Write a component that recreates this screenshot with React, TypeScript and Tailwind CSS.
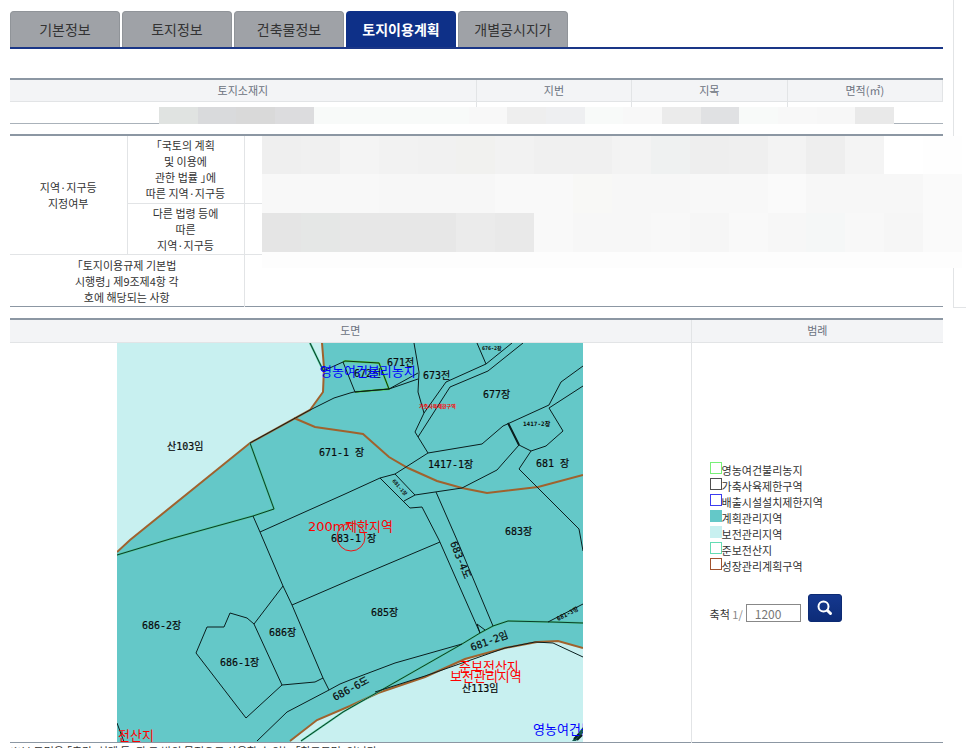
import { useState } from 'react'

const tabs = ['기본정보', '토지정보', '건축물정보', '토지이용계획', '개별공시지가']

const legend = [
  { name: '영농여건불리농지', swatch: 'border border-[#78f078] bg-white' },
  { name: '가축사육제한구역', swatch: 'border border-[#505050] bg-white' },
  { name: '배출시설설치제한지역', swatch: 'border border-[#3c3cf0] bg-white' },
  { name: '계획관리지역', swatch: 'bg-[#64c8c8]' },
  { name: '보전관리지역', swatch: 'bg-[#c8f0f0]' },
  { name: '준보전산지', swatch: 'border border-[#64dcb4] bg-white' },
  { name: '성장관리계획구역', swatch: 'border border-[#a0522d] bg-white' },
]

// Masked values, one colour per block
const landMask = [
  '#e0e3e1', '#d9dadc', '#d9d9d9', '#dcdcde', '#f8faf9', '#f8faf9', '#f8faf9', '#f8faf9', '#f8f8f8', '#eeeeee',
  '#eeeff1', '#f8faf9', '#f8f8f8', '#ebebeb', '#e0e1e3', '#f8faf9', '#f8f8f8', '#f7f7f7', '#e9e9e9',
]

const zoneMask = [
  [
    '#efefef', '#f0f0f0', '#f4f4f4', '#f2f2f2', '#f1f1f1', '#f1f1ef', '#f2f2f2', '#f0f0f0', '#f0f0f0',
    '#f3f3f3', '#eff1f1', '#eeeeee', '#efefef', '#f3f3f3', '#eeeeee', '#f4f4f4', '#ffffff', '#fefefe',
  ],
  [
    '#f8f8f8', '#f8f8f8', '#f8f8f8', '#f7f7f7', '#f7f7f7', '#f7f7f7', '#f9f9f9', '#f9f9f9', '#f8f8f6',
    '#f7f7f7', '#f7f7f7', '#f8f8f8', '#f8f8f8', '#fafafa', '#f7f7f7', '#f7f7f7', '#f7f7f7', '#fafafa',
  ],
  [
    '#e5e5e5', '#e5e7e6', '#e7e7e7', '#e7e7e7', '#e7e7e7', '#ebebeb', '#e9e9e9', '#f9f9f9', '#f7f7f7',
    '#f7f7f7', '#f8f8f8', '#f6f6f6', '#f9f9f9', '#f7f7f7', '#f5f7f7', '#f8f8f8', '#f6f6f6', '#fafafa',
  ],
]

const parcels = [
  '310,410 334,398 350,393 354,392 389,389 418,373',
  '389,389 418,379',
  '414,343 419,372 418,392 424,413',
  '512,343 486,364 446,382 424,413 415,432 428,453',
  '523,343 488,371 450,387 418,437',
  '477,343 486,364',
  '428,453 482,444 503,426 549,405 561,382 583,366',
  '583,386 549,408 563,431 546,446 531,451 519,445 508,423',
  '531,451 519,469 579,529 583,551',
  '519,445 497,470 462,488 415,495 404,501',
  '428,453 395,474 380,478 345,494 260,532',
  '395,474 415,495',
  '380,478 410,508 422,507 439,540 480,633',
  '436,492 457,540 493,626',
  '253,516 260,532 283,586 292,605 323,678 329,690',
  '283,586 254,624 282,685 315,682 323,678',
  '292,605 350,580 440,542',
  '254,624 247,618 230,613 224,627 207,627 196,653 246,718 282,685',
  '257,741 287,712 329,690 340,684 350,680 395,663 462,644',
  '548,622 583,604',
  '375,692 425,676 505,648 535,642 553,643 583,657',
  '480,633 477,624 485,630',
  '117,723 124,742',
  '323,371 343,362 355,392',
]

const forestLines = [
  '310,343 323,370',
  '250,443 274,509 253,516 170,539 117,555',
  '301,741 343,712 378,692 462,644 480,633 493,626 508,621 552,622 583,623',
]

const growthLines = [
  '322,343 324,368 323,392 310,410 250,443 130,540 117,552',
  '294,418 315,427 350,432 363,434 389,457 408,468 437,481 462,488 487,493 538,487 583,475',
  '290,741 317,720 350,706 378,693 425,677 465,659 505,648 537,642 558,641 583,648',
]

const lotLabels = [
  { x: 167, y: 450, text: '산103임' },
  { x: 387, y: 366, text: '671전' },
  { x: 354, y: 377, text: '672전' },
  { x: 423, y: 379, text: '673전' },
  { x: 483, y: 398, text: '677장' },
  { x: 319, y: 456, text: '671-1 장' },
  { x: 428, y: 468, text: '1417-1장' },
  { x: 536, y: 467, text: '681 장' },
  { x: 331, y: 542, text: '683-1 장' },
  { x: 505, y: 535, text: '683장' },
  { x: 371, y: 616, text: '685장' },
  { x: 142, y: 629, text: '686-2장' },
  { x: 269, y: 636, text: '686장' },
  { x: 220, y: 666, text: '686-1장' },
  { x: 462, y: 692, text: '산113임' },
]

function Mask({ colors }: { colors: string[] }) {
  return (
    <div className="flex flex-1">
      {colors.map((color, i) => (
        <div key={i} className="flex-1" style={{ backgroundColor: color }} />
      ))}
    </div>
  )
}

function ParcelMap() {
  return (
    <svg
      className="mx-auto block font-['DejaVu_Sans_Mono','Noto_Sans_CJK_KR',monospace]"
      width="466"
      height="399"
      viewBox="117 343 466 399"
      role="img"
      aria-label="도면"
    >
      <rect x="117" y="343" width="466" height="399" fill="#64c8c8" />
      <polygon points="117,343 322,343 324,368 323,392 310,410 250,443 130,540 117,552" fill="#c8f0f0" />
      <polygon
        points="290,742 317,720 350,706 378,693 425,677 465,659 505,648 537,642 558,641 583,648 583,742"
        fill="#c8f0f0"
      />
      <polyline points="343,362 345,361 379,363 389,389 355,392" fill="none" stroke="#50d250" strokeWidth="2" />
      <polyline points="343,362 345,361 379,363 389,389 355,392" fill="none" stroke="#103010" strokeWidth="1" />
      <g fill="none" stroke="#a0622d" strokeWidth="2">
        {growthLines.map((points) => (
          <polyline key={points} points={points} />
        ))}
      </g>
      <g fill="none" stroke="#50c896" strokeWidth="2">
        {forestLines.map((points) => (
          <polyline key={points} points={points} />
        ))}
      </g>
      <g fill="none" stroke="#0a3c28" strokeWidth="1">
        {forestLines.map((points) => (
          <polyline key={points} points={points} />
        ))}
      </g>
      <g fill="none" stroke="#0a1e1e" strokeWidth="1">
        {parcels.map((points) => (
          <polyline key={points} points={points} />
        ))}
        <polyline points="310,410 250,443" />
        <polyline points="508,423 519,445" strokeWidth="2" />
      </g>
      <path d="M572 741l11-14v6l-7 8z" fill="#145a50" />
      <path d="M574 739l5-5M577 740l5-5" stroke="#0a1e1e" strokeWidth="2" />
      <circle cx="323" cy="369" r="2" fill="none" stroke="#0a1e78" />

      <g fill="#0a0a0a" stroke="#0a0a0a" strokeWidth="0.2" fontSize="10">
        {lotLabels.map(({ x, y, text }) => (
          <text key={text} x={x} y={y}>
            {text}
          </text>
        ))}
        <text transform="translate(450 543) rotate(68)">683-4도</text>
        <text transform="translate(472 651) rotate(-20)">681-2임</text>
        <text transform="translate(335 701) rotate(-28)">686-6도</text>
      </g>
      <g fill="#0a0a0a" fontSize="6" fontWeight="bold">
        <text x="482" y="350" fontSize="5">676-2장</text>
        <text x="523" y="426">1417-2장</text>
        <text transform="translate(392 481) rotate(50)" fontSize="5">681-1장</text>
        <text transform="translate(558 621) rotate(-27)">681-3장</text>
      </g>

      <g className="font-['DejaVu_Sans','Noto_Sans_CJK_KR',sans-serif]" fontSize="13">
        <text x="320" y="376" fill="#0000ff">영농여건불리농지</text>
        <text x="533" y="734" fill="#0000ff">영농여건불리농지</text>
        <g fill="#ff0000">
          <text x="308" y="531">200m&apos;</text>
          <text x="345" y="531">제한지역</text>
          <text x="459" y="671">준보전산지</text>
          <text x="450" y="681">보전관리지역</text>
          <text x="118" y="740">전산지</text>
          <text x="419" y="408" fontSize="5" fontWeight="bold">가축사육제한구역</text>
        </g>
      </g>
      <circle cx="351" cy="537" r="14" fill="none" stroke="#f01414" />
    </svg>
  )
}

function App() {
  const [active, setActive] = useState('토지이용계획')
  const [scale, setScale] = useState('1200')

  return (
    <div className="flex h-screen items-start overflow-hidden bg-white pl-[10px] font-['Noto_Sans_CJK_KR',sans-serif] text-[11px] leading-4 text-[#333]">
      <main className="min-w-0 flex-1 pt-[11px]">
        <nav className="flex gap-[2px] border-b-2 border-[#1a3687]">
          {tabs.map((tab) => (
            <button
              key={tab}
              type="button"
              onClick={() => setActive(tab)}
              className={
                tab === active
                  ? 'h-9 w-[110px] rounded-t bg-[#0e3088] text-sm font-bold text-white'
                  : 'h-9 w-[110px] rounded-t border border-b-0 border-[#909499] bg-[#9fa2a7] pb-[2px] text-sm text-[#333]'
              }
            >
              {tab}
            </button>
          ))}
        </nav>

        <div className="relative mt-[29px]">
          <table className="w-full table-fixed border-collapse border-t-2 border-b border-t-[#8c97a3] border-b-[#aab2ba]">
            <thead>
              <tr className="h-[22px] border-b border-[#e2e4e6] bg-[#f3f4f6] text-[#6b7280]">
                <th className="w-1/2 border-r border-[#e2e4e6] p-0 pb-px font-normal">토지소재지</th>
                <th className="w-1/6 border-r border-[#e2e4e6] p-0 pb-px font-normal">지번</th>
                <th className="w-1/6 border-r border-[#e2e4e6] p-0 pb-px font-normal">지목</th>
                <th className="w-1/6 border-r border-[#e2e4e6] p-0 pb-px font-normal">면적(㎡)</th>
              </tr>
            </thead>
            <tbody>
              <tr className="h-[22px]">
                <td className="border-r border-[#e2e4e6]" />
                <td className="border-r border-[#e2e4e6]" />
                <td className="border-r border-[#e2e4e6]" />
                <td />
              </tr>
            </tbody>
          </table>
          <div className="absolute right-[49px] bottom-0 left-[149px] flex h-[17px]">
            <Mask colors={landMask} />
          </div>
        </div>

        <div className="relative mt-[10px]">
          <table className="w-full table-fixed border-collapse border-t-2 border-b border-[#8c97a3] text-center">
            <colgroup>
              <col className="w-[117px]" />
              <col className="w-[117px]" />
              <col />
            </colgroup>
            <tbody>
              <tr className="h-[69px]">
                <th rowSpan={2} className="border-r border-b border-[#e2e4e6] p-0 font-normal">
                  지역·지구등
                  <br />
                  지정여부
                </th>
                <th className="border-r border-b border-[#e2e4e6] p-0 font-normal">
                  ｢국토의 계획
                  <br />및 이용에
                  <br />
                  관한 법률 ｣에
                  <br />
                  따른 지역·지구등
                </th>
                <td className="border-b border-[#e2e4e6]" />
              </tr>
              <tr className="h-[51px]">
                <th className="border-r border-b border-[#e2e4e6] p-0 font-normal">
                  다른 법령 등에
                  <br />
                  따른
                  <br />
                  지역·지구등
                </th>
                <td className="border-b border-[#e2e4e6]" />
              </tr>
              <tr className="h-[52px]">
                <th colSpan={2} className="border-r border-[#e2e4e6] p-0 font-normal">
                  ｢토지이용규제 기본법
                  <br />
                  시행령｣ 제9조제4항 각
                  <br />
                  호에 해당되는 사항
                </th>
                <td />
              </tr>
            </tbody>
          </table>
          <div className="absolute top-[2px] -right-[19px] left-[252px] flex h-[132px] flex-col">
            {zoneMask.map((colors, i) => (
              <Mask key={i} colors={colors} />
            ))}
            <div className="h-4 bg-[#fdfdfd]" />
          </div>
        </div>

        <table className="mt-[11px] w-full table-fixed border-collapse border-t-2 border-b border-[#8c97a3]">
          <colgroup>
            <col className="w-[73%]" />
            <col />
          </colgroup>
          <thead>
            <tr className="h-[23px] border-b border-[#e2e4e6] bg-[#f3f4f6] text-[#6b7280]">
              <th className="border-r border-[#e2e4e6] p-0 pb-[2px] font-normal">도면</th>
              <th className="p-0 pb-[2px] font-normal">범례</th>
            </tr>
          </thead>
          <tbody>
            <tr>
              <td className="border-r border-[#e2e4e6] p-0">
                <ParcelMap />
              </td>
              <td className="p-0 pl-[18px] align-middle">
                <ul>
                  {legend.map(({ name, swatch }) => (
                    <li key={name} className="flex items-start">
                      <span className={`size-3 shrink-0 ${swatch}`} />
                      {name}
                    </li>
                  ))}
                </ul>
                <div className="mt-5 flex items-end">
                  <label htmlFor="scale" className="mr-[3px]">
                    축척 <span className="text-[#888]">1/</span>
                  </label>
                  <input
                    id="scale"
                    type="text"
                    value={scale}
                    onChange={(e) => setScale(e.target.value)}
                    className="h-[18px] w-[55px] border border-[#888] bg-white px-2 text-xs text-[#777]"
                  />
                  <button
                    type="button"
                    aria-label="검색"
                    className="ml-[7px] flex h-7 w-[34px] items-center justify-center rounded-[3px] border border-[#0c2a73] bg-linear-to-b from-[#15388f] to-[#0d2c78]"
                  >
                    <svg width="16" height="16" viewBox="0 0 16 16" fill="none" stroke="#fff" strokeWidth="2">
                      <circle cx="6.5" cy="6.5" r="5" />
                      <path d="M10.5 10.5L13.5 13.5" strokeWidth="3" strokeLinecap="round" />
                    </svg>
                  </button>
                </div>
              </td>
            </tr>
          </tbody>
        </table>
        <p>※본 도면은 ｢측량, 설계 등｣과 그 밖의 목적으로 사용할 수 없는 ｢참고도면｣입니다.</p>
      </main>
      <aside className="ml-[10px] h-[308px] w-[13px] border-b border-l border-[#e2e4e6]" />
    </div>
  )
}

export default App
